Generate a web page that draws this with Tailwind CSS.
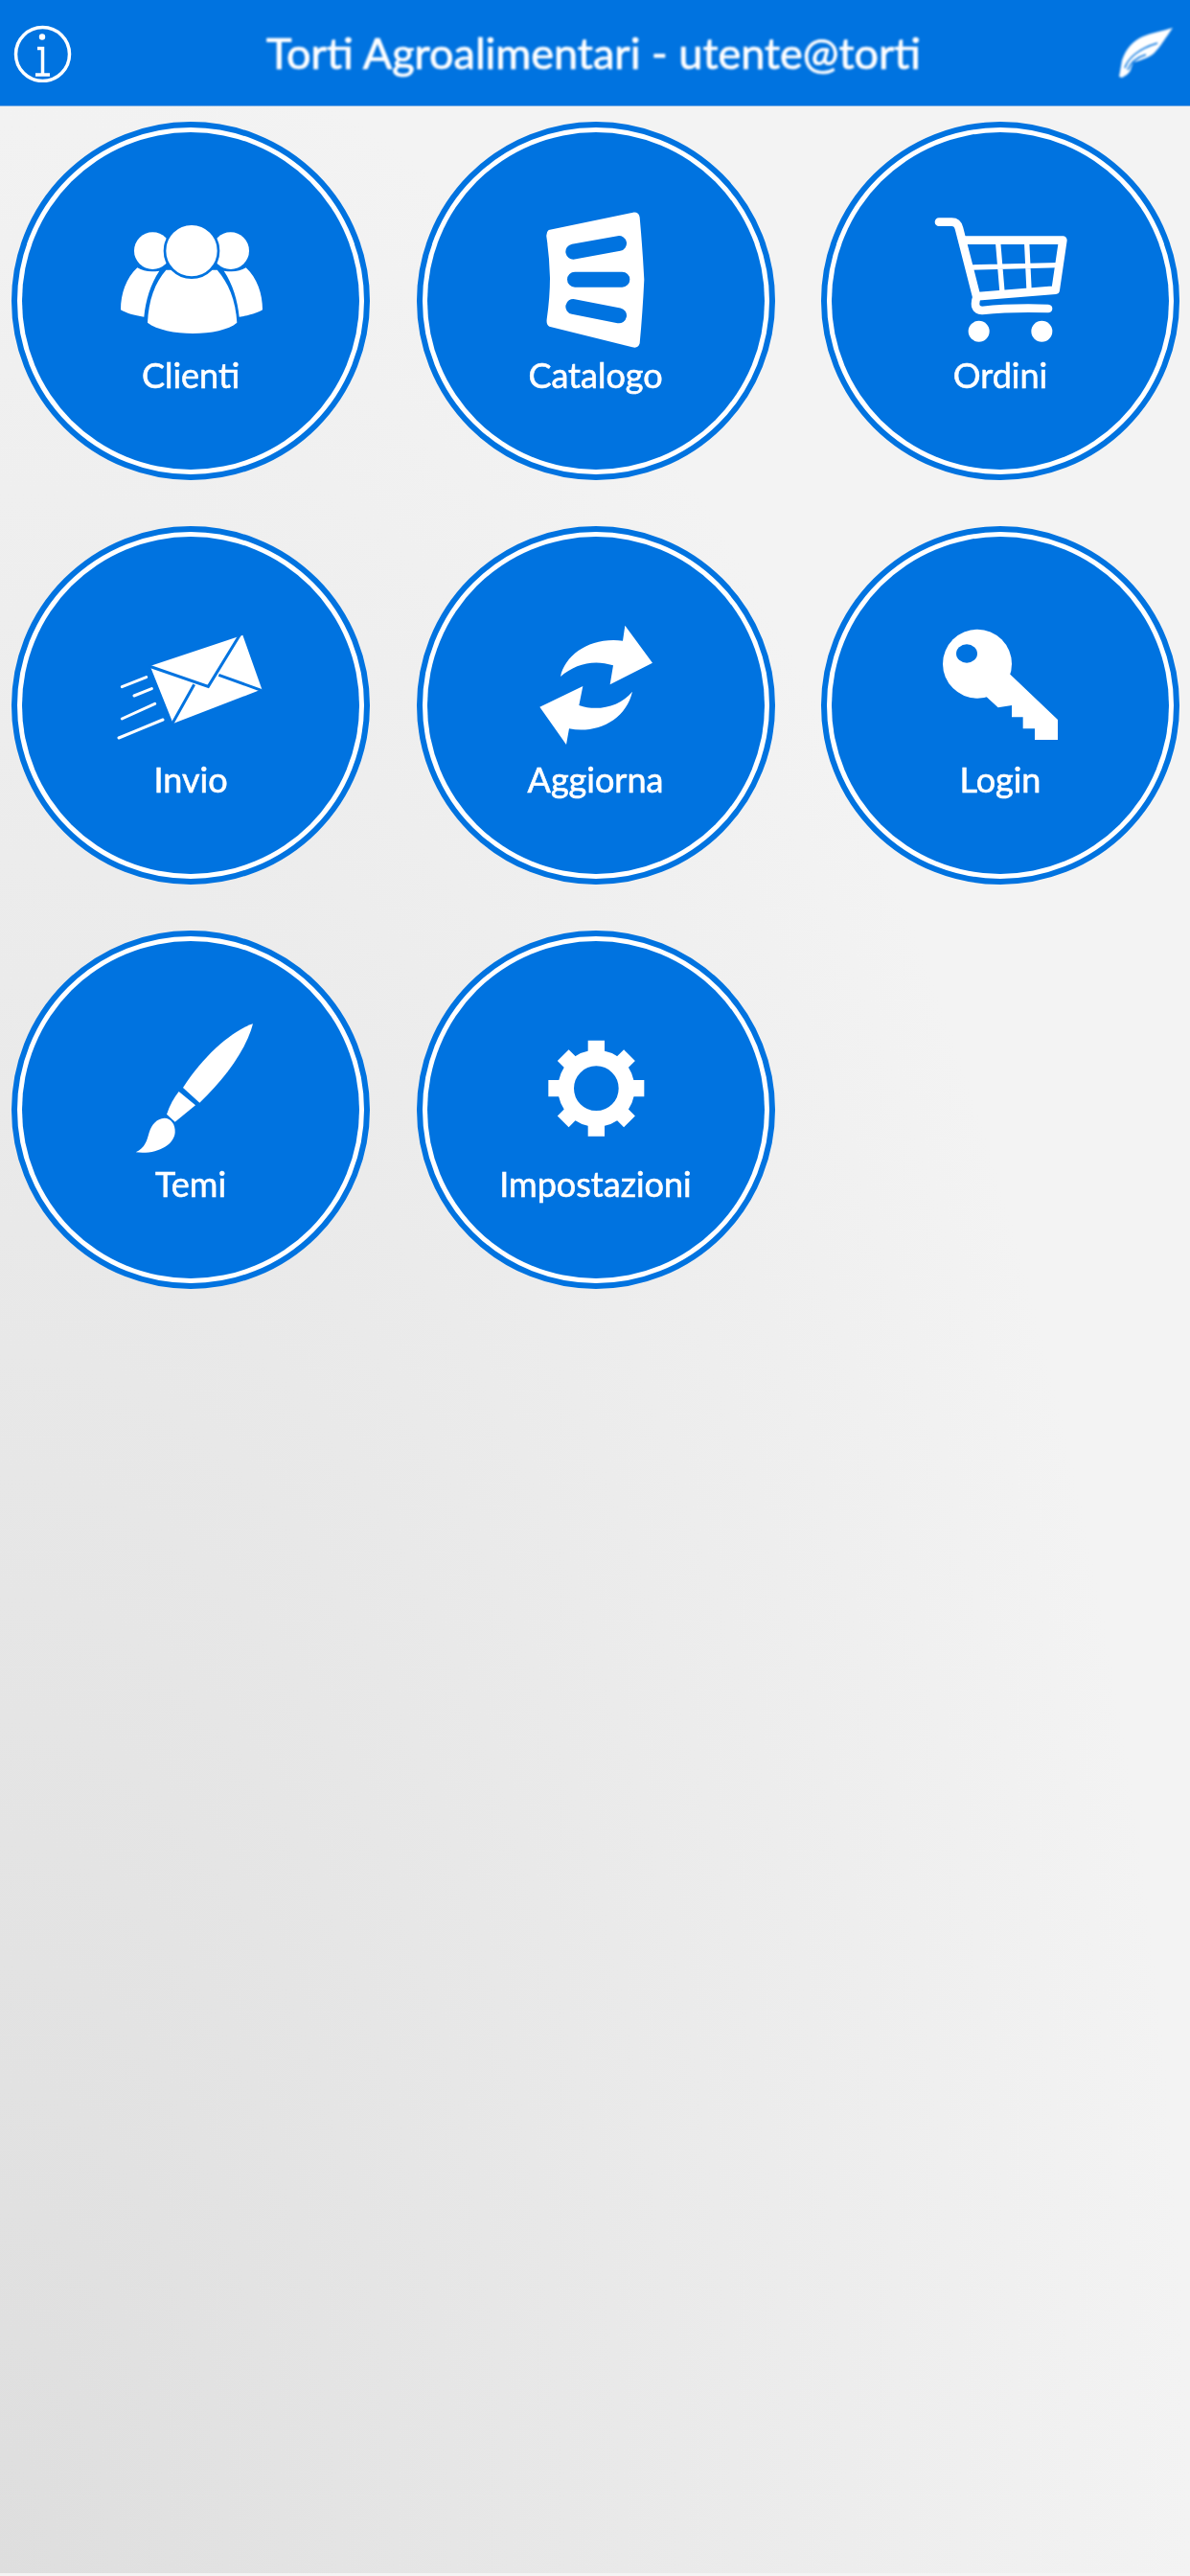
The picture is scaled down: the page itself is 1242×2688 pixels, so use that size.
<!DOCTYPE html>
<html lang="it">
<head>
    <meta charset="UTF-8">
    <meta name="viewport" content="width=device-width, initial-scale=1.0">
    <title>Torti Agroalimentari</title>
    <script src="https://cdn.jsdelivr.net/npm/@tailwindcss/browser@4"></script>
</head>
<body class="font-['Lato',sans-serif] text-white">
    <div class="w-[1242px] h-[2688px] flex flex-col bg-[radial-gradient(ellipse_1242px_2688px_at_0_100%,#dedede,#f3f3f3)]">

        <header class="h-[111px] flex items-center justify-between bg-[#0073e0] border-b border-[#6fa9e4] pl-[14px] pr-[18px]">
            <svg class="w-[62px] h-[62px] blur-[0.7px]" viewBox="0 0 62 62" fill="none" stroke="white">
                <circle cx="30.500" cy="32.500" r="28" stroke-width="3.500"/>
                <circle cx="30" cy="14.500" r="3.200" fill="white" stroke="none"/>
                <path d="M25 26.500h5.500v27M23 54h15" stroke-width="3.500"/>
            </svg>
            <h1 class="mr-[5px] text-[45px] leading-none [-webkit-text-stroke:0.7px_white] blur-[0.8px]">Torti Agroalimentari - utente@torti</h1>
            <svg class="w-[56px] h-[56px] blur-[0.8px]" viewBox="0 0 56 56" fill="white">
                <path d="M56 2C44 6 34 7 25 11C15 15 7 24 3 36L0 53L3 54C7 52 11 49 12 46C13 42 14 40 15 38C25 35 32 33 37 28C42 23 45 18 56 2Z"/>
                <path fill="none" stroke="#0073e0" stroke-width="1.500" d="M6 44C9 34 20 24 40 18M9 46C12 38 18 33 28 30"/>
            </svg>
        </header>

        <main class="flex-1 grid grid-cols-[repeat(3,374px)] auto-rows-[374px] gap-x-[48.5px] gap-y-[48px] pl-[12px] pt-[16px] blur-[0.7px]">

            <a class="rounded-full border-[6px] border-[#0073e0] bg-white p-[5px]">
                <div class="w-full h-full rounded-full bg-[#0073e0] flex flex-col items-center pt-[79px]">
                    <svg class="w-[160px] h-[150px]" viewBox="357 321 480 450" fill="white">
                        <circle cx="478" cy="455" r="58"/>
                        <circle cx="722" cy="455" r="58"/>
                        <path d="M462 680C465 610 485 555 520 515H680C715 555 738 610 742 680C690 725 520 725 462 680Z"/>
                        <path d="M430 508C450 520 470 522 499 518C471 560 456 610 451 662C420 658 395 650 378 640C378 590 395 540 430 508Z"/>
                        <path d="M770 508C750 520 730 522 701 518C729 560 744 610 749 662C780 658 805 650 822 640C822 590 805 540 770 508Z"/>
                        <circle cx="600" cy="455" r="84" stroke="#0073e0" stroke-width="8"/>
                    </svg>
                    <span class="text-[36px] leading-[48px] [-webkit-text-stroke:0.6px_white]">Clienti</span>
                </div>
            </a>

            <a class="rounded-full border-[6px] border-[#0073e0] bg-white p-[5px]">
                <div class="w-full h-full rounded-full bg-[#0073e0] flex flex-col items-center pt-[79px]">
                    <svg class="w-[160px] h-[150px]" viewBox="366 321 480 450">
                        <path fill="white" d="M458 390L722 335Q740 333 743 350Q752 450 757 545Q752 650 743 745Q738 762 720 757L460 692Q450 687 452 670Q462 600 462 540Q460 470 451 410Q450 396 458 390Z"/>
                        <path fill="none" stroke="#0073e0" stroke-width="48" stroke-linecap="round" d="M535 458L678 432M540 545H688M535 630L678 658"/>
                    </svg>
                    <span class="text-[36px] leading-[48px] [-webkit-text-stroke:0.6px_white]">Catalogo</span>
                </div>
            </a>

            <a class="rounded-full border-[6px] border-[#0073e0] bg-white p-[5px]">
                <div class="w-full h-full rounded-full bg-[#0073e0] flex flex-col items-center pt-[79px]">
                    <svg class="w-[160px] h-[150px]" viewBox="372 321 480 450" fill="none" stroke="white">
                        <path stroke-width="26" stroke-linecap="round" stroke-linejoin="round" d="M420 365H460Q478 365 483 385L538 600Q525 640 555 642Q650 632 762 636"/>
                        <path stroke-width="26" stroke-linejoin="round" d="M495 422H808L785 578L535 598"/>
                        <path stroke-width="16" d="M605 430L618 585M695 430L702 575M520 507L795 500"/>
                        <circle cx="545" cy="707" r="33" fill="white" stroke="none"/>
                        <circle cx="742" cy="707" r="33" fill="white" stroke="none"/>
                    </svg>
                    <span class="text-[36px] leading-[48px] [-webkit-text-stroke:0.6px_white]">Ordini</span>
                </div>
            </a>

            <a class="rounded-full border-[6px] border-[#0073e0] bg-white p-[5px]">
                <div class="w-full h-full rounded-full bg-[#0073e0] flex flex-col items-center pt-[79px]">
                    <svg class="w-[160px] h-[150px]" viewBox="357 294 480 450" fill="white">
                        <path d="M470 462L760 365L820 535L542 642Z"/>
                        <path fill="none" stroke="#0073e0" stroke-width="9" d="M466 462L652 526L755 358M538 645L608 520M685 490L818 538"/>
                        <path fill="none" stroke="white" stroke-width="9" stroke-linecap="round" d="M382 527L458 497M420 555L475 533M382 627L485 580M372 687L510 630"/>
                    </svg>
                    <span class="text-[36px] leading-[48px] [-webkit-text-stroke:0.6px_white]">Invio</span>
                </div>
            </a>

            <a class="rounded-full border-[6px] border-[#0073e0] bg-white p-[5px]">
                <div class="w-full h-full rounded-full bg-[#0073e0] flex flex-col items-center pt-[79px]">
                    <svg class="w-[160px] h-[150px]" viewBox="366 294 480 450" fill="white">
                        <path d="M495 495C510 425 590 370 690 383L697 335L783 452L650 520L660 460C600 440 540 455 495 495Z"/>
                        <path d="M720 542C700 630 610 675 522 658L513 708L430 590L565 525L553 585C610 605 680 590 720 542Z"/>
                    </svg>
                    <span class="text-[36px] leading-[48px] [-webkit-text-stroke:0.6px_white]">Aggiorna</span>
                </div>
            </a>

            <a class="rounded-full border-[6px] border-[#0073e0] bg-white p-[5px]">
                <div class="w-full h-full rounded-full bg-[#0073e0] flex flex-col items-center pt-[79px]">
                    <svg class="w-[160px] h-[150px]" viewBox="372 294 480 450">
                        <circle cx="540" cy="455" r="108" fill="white"/>
                        <path fill="white" d="M640 485L792 630V693H720V658H683V622H648V585L605 592L565 555Z"/>
                        <ellipse cx="507" cy="423" rx="33" ry="29" fill="#0073e0"/>
                    </svg>
                    <span class="text-[36px] leading-[48px] [-webkit-text-stroke:0.6px_white]">Login</span>
                </div>
            </a>

            <a class="rounded-full border-[6px] border-[#0073e0] bg-white p-[5px]">
                <div class="w-full h-full rounded-full bg-[#0073e0] flex flex-col items-center pt-[79px]">
                    <svg class="w-[160px] h-[150px]" viewBox="357 303 480 450" fill="white">
                        <path d="M792 325C730 345 640 420 573 525L625 572C700 500 770 410 792 325Z"/>
                        <path d="M560 537L612 580L548 632L522 608C532 580 545 555 560 537Z"/>
                        <path d="M515 620C535 620 550 640 548 665C545 705 490 735 425 727C455 712 460 690 467 665C475 640 490 622 515 620Z"/>
                    </svg>
                    <span class="text-[36px] leading-[48px] [-webkit-text-stroke:0.6px_white]">Temi</span>
                </div>
            </a>

            <a class="rounded-full border-[6px] border-[#0073e0] bg-white p-[5px]">
                <div class="w-full h-full rounded-full bg-[#0073e0] flex flex-col items-center pt-[79px]">
                    <svg class="w-[160px] h-[150px]" viewBox="366 303 480 450" fill="white">
                        <circle cx="607" cy="527" r="95" fill="none" stroke="white" stroke-width="50"/>
                        <path d="M581 377H633V440H581ZM581 614H633V677H581ZM457 501H520V553H457ZM694 501H757V553H694Z"/>
                        <path transform="rotate(45 607 527)" d="M582 380H632V440H582ZM582 614H632V674H582ZM460 502H520V552H460ZM694 502H754V552H694Z"/>
                    </svg>
                    <span class="text-[36px] leading-[48px] [-webkit-text-stroke:0.6px_white]">Impostazioni</span>
                </div>
            </a>
        </main>

        <div class="h-[3px] bg-[#f4f4f4]"></div>
    </div>
</body>
</html>
